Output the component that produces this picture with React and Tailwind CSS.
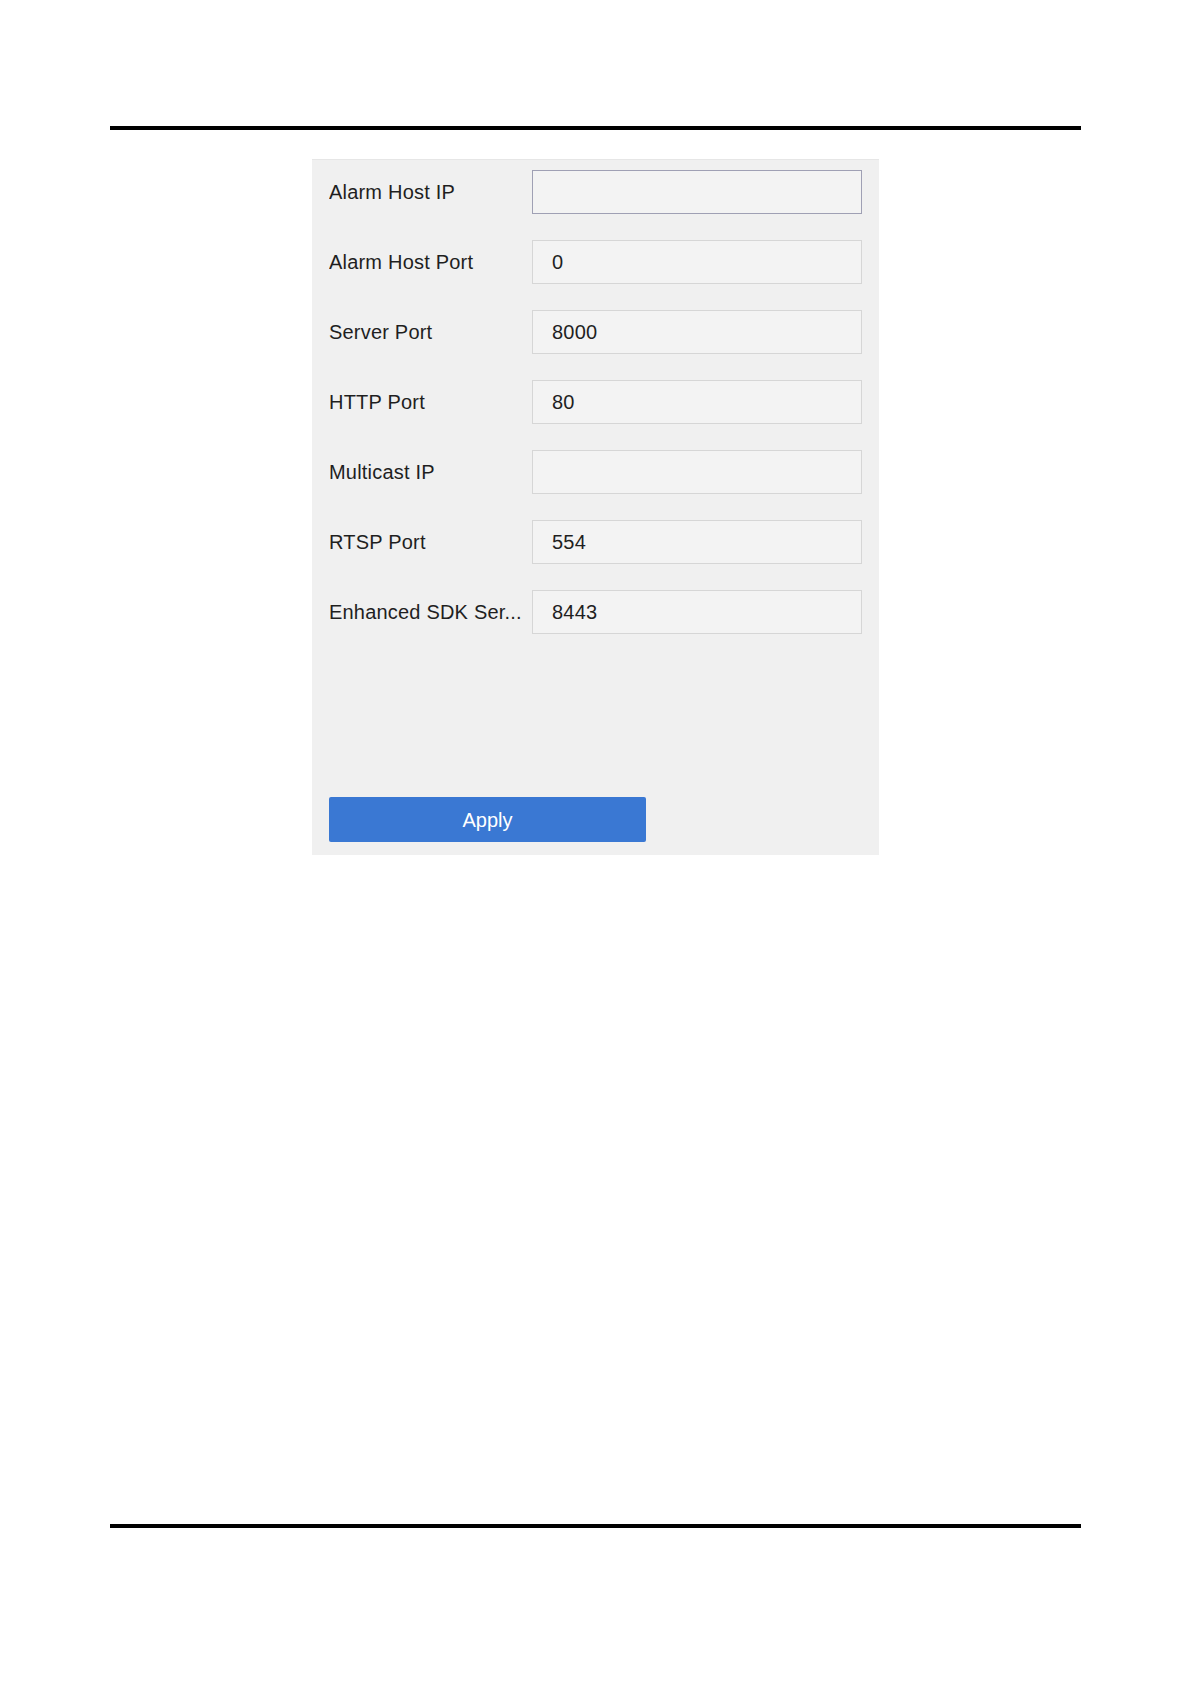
import React from 'react'

const fields = [
  { label: 'Alarm Host IP', value: '', focused: true },
  { label: 'Alarm Host Port', value: '0' },
  { label: 'Server Port', value: '8000' },
  { label: 'HTTP Port', value: '80' },
  { label: 'Multicast IP', value: '' },
  { label: 'RTSP Port', value: '554' },
  { label: 'Enhanced SDK Ser...', value: '8443' },
]

const FieldRow = ({ label, value, focused }) => (
  <div className="flex items-center h-[44px]">
    <div className="w-[203px] whitespace-nowrap overflow-hidden text-[20px] leading-none tracking-[0.2px] text-[#1f1f1f]">
      {label}
    </div>
    <div
      className={`w-[330px] h-[44px] flex items-center pl-[19px] text-[20px] leading-none tracking-[0.2px] text-[#1f1f1f] bg-[#f3f3f3] border ${
        focused ? 'border-[#9fa0b4]' : 'border-[#d6d6d6]'
      }`}
    >
      {value}
    </div>
  </div>
)

export default function App() {
  return (
    <div
      className="w-[1191px] h-[1684px] bg-white px-[110px] pt-[126px]"
      style={{ fontFamily: '"Liberation Sans", Arial, sans-serif' }}
    >
      <div className="h-[4px] bg-black" />

      {/* Settings panel */}
      <div className="mt-[29px] ml-[202px] w-[567px] h-[696px] bg-[#f0f0f0] border-t border-[#e6e6e6] pt-[10px] px-[17px] pb-[13px] flex flex-col">
        <div className="flex flex-col gap-[26px]">
          {fields.map((f) => (
            <FieldRow key={f.label} {...f} />
          ))}
        </div>
        <button className="mt-[163px] w-[317px] h-[45px] bg-[#3a78d3] rounded-[2px] text-white text-[20px] leading-none">
          Apply
        </button>
      </div>

      <div className="mt-[669px] h-[4px] bg-black" />
    </div>
  )
}
